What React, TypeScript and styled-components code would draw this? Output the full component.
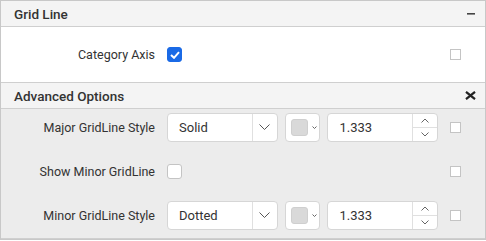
import React from "react";
import styled, { createGlobalStyle } from "styled-components";

const Global = createGlobalStyle`
  html, body { margin: 0; padding: 0; background: #fff; }
  body { font-family: Roboto, "Liberation Sans", Arial, sans-serif; }
`;

const Panel = styled.div`
  width: 486px;
  box-sizing: border-box;
  border: 1px solid #c8c8c8;
  display: flex;
  flex-direction: column;
`;

const Header = styled.div`
  height: 25px;
  background: #f4f4f4;
  border-bottom: 1px solid #cfcfcf;
  display: flex;
  align-items: center;
  justify-content: space-between;
  padding: 0 9px 0 13px;
  font-size: 13.5px;
  font-weight: 500;
  color: #333;
`;

const Section = styled.div<{ $gray?: boolean }>`
  background: ${(p) => (p.$gray ? "#ececec" : "#fff")};
  border-bottom: 1px solid #cfcfcf;
  display: flex;
  flex-direction: column;
  padding: ${(p) => (p.$gray ? "4px 0 8px" : "0")};
  gap: 15px;
  height: ${(p) => (p.$gray ? "130px" : "56px")};
  box-sizing: border-box;
  justify-content: ${(p) => (p.$gray ? "flex-start" : "center")};
`;

const Row = styled.div`
  display: grid;
  grid-template-columns: 154px 271px 11px;
  column-gap: 12px;
  align-items: center;
  height: 29px;
`;

const Label = styled.div`
  text-align: right;
  font-size: 12.5px;
  color: #333;
`;

const Controls = styled.div`
  display: flex;
  align-items: center;
  gap: 7px;
`;

const Box = styled.div<{ $w: number }>`
  width: ${(p) => p.$w}px;
  height: 29px;
  box-sizing: border-box;
  border: 1px solid #d6d6d6;
  border-radius: 4px;
  background: #fff;
  display: flex;
  align-items: stretch;
  overflow: hidden;
`;

const BoxText = styled.div`
  flex: 1;
  display: flex;
  align-items: center;
  padding-left: 11px;
  font-size: 13px;
  color: #333;
`;

const DropBtn = styled.div`
  width: 24px;
  border-left: 1px solid #e0e0e0;
  display: flex;
  align-items: center;
  justify-content: center;
`;

const Spin = styled.div`
  width: 24px;
  border-left: 1px solid #e0e0e0;
  display: flex;
  flex-direction: column;
`;

const SpinHalf = styled.div<{ $top?: boolean }>`
  flex: 1;
  display: flex;
  align-items: center;
  justify-content: center;
  border-bottom: ${(p) => (p.$top ? "1px solid #e0e0e0" : "none")};
`;

const ColorBox = styled.div`
  width: 36px;
  height: 29px;
  box-sizing: border-box;
  border: 1px solid #d6d6d6;
  border-radius: 4px;
  background: #fff;
  display: flex;
  align-items: center;
  padding-left: 5px;
  gap: 4px;
`;

const Swatch = styled.div`
  width: 17px;
  height: 17px;
  border-radius: 3px;
  background: #d9d9d9;
  border: 1px solid #cfcfcf;
  box-sizing: border-box;
`;

const Check = styled.div<{ $on?: boolean }>`
  width: 15px;
  height: 15px;
  box-sizing: border-box;
  border-radius: 3px;
  border: 1px solid ${(p) => (p.$on ? "#1a6ae6" : "#c4c4c4")};
  background: ${(p) => (p.$on ? "#1a6ae6" : "#fff")};
  display: flex;
  align-items: center;
  justify-content: center;
`;

const Square = styled.div`
  width: 11px;
  height: 11px;
  box-sizing: border-box;
  border: 1px solid #c4c4c4;
  background: #fff;
`;

const Chevron = ({ w = 10, up = false, color = "#555" }: { w?: number; up?: boolean; color?: string }) => (
  <svg width={w} height={w / 2 + 1} viewBox={`0 0 ${w} ${w / 2 + 1}`}>
    <polyline
      points={up ? `0.5,${w / 2 + 0.5} ${w / 2},1 ${w - 0.5},${w / 2 + 0.5}` : `0.5,0.5 ${w / 2},${w / 2} ${w - 0.5},0.5`}
      fill="none"
      stroke={color}
      strokeWidth="1"
    />
  </svg>
);

const Select = ({ value }: { value: string }) => (
  <Box $w={111}>
    <BoxText>{value}</BoxText>
    <DropBtn>
      <Chevron w={11} />
    </DropBtn>
  </Box>
);

const Numeric = ({ value }: { value: string }) => (
  <Box $w={111}>
    <BoxText>{value}</BoxText>
    <Spin>
      <SpinHalf $top>
        <Chevron w={8} up color="#666" />
      </SpinHalf>
      <SpinHalf>
        <Chevron w={8} color="#666" />
      </SpinHalf>
    </Spin>
  </Box>
);

const ColorPick = () => (
  <ColorBox>
    <Swatch />
    <Chevron w={5} color="#666" />
  </ColorBox>
);

export default function App() {
  return (
    <>
      <Global />
      <Panel>
        <Header>
          <span>Grid Line</span>
          <svg width="10" height="4" viewBox="0 0 10 4">
            <rect x="1" y="1" width="8" height="1.6" fill="#444" />
          </svg>
        </Header>
        <Section>
          <Row>
            <Label>Category Axis</Label>
            <Controls>
              <Check $on>
                <svg width="10" height="8" viewBox="0 0 10 8">
                  <polyline points="1,4 4,6.8 9,1.2" fill="none" stroke="#fff" strokeWidth="2" />
                </svg>
              </Check>
            </Controls>
            <Square />
          </Row>
        </Section>
        <Header>
          <span>Advanced Options</span>
          <svg width="11" height="9" viewBox="0 0 11 9">
            <path d="M1 0.8 L10 8.2 M10 0.8 L1 8.2" stroke="#222" strokeWidth="2.2" />
          </svg>
        </Header>
        <Section $gray>
          <Row>
            <Label>Major GridLine Style</Label>
            <Controls>
              <Select value="Solid" />
              <ColorPick />
              <Numeric value="1.333" />
            </Controls>
            <Square />
          </Row>
          <Row>
            <Label>Show Minor GridLine</Label>
            <Controls>
              <Check />
            </Controls>
            <Square />
          </Row>
          <Row>
            <Label>Minor GridLine Style</Label>
            <Controls>
              <Select value="Dotted" />
              <ColorPick />
              <Numeric value="1.333" />
            </Controls>
            <Square />
          </Row>
        </Section>
      </Panel>
    </>
  );
}
